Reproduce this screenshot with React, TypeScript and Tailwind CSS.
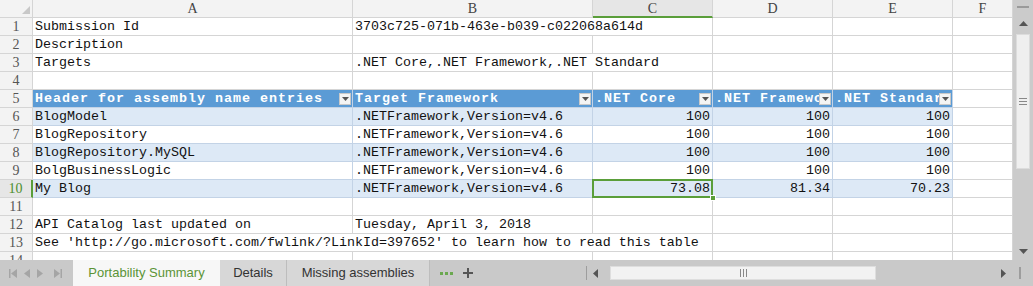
import React from "react";

const mono = { fontFamily: '"Liberation Mono", "DejaVu Sans Mono", monospace' };

const cols = ["A", "B", "C", "D", "E", "F"];

function Dd() {
  return (
    <span className="absolute right-[1px] top-[3px] w-[12px] h-[12px] bg-[#f4f4f4] border border-[#c9c9c9] flex items-center justify-center">
      <svg width="7" height="4" viewBox="0 0 7 4"><path d="M0 0h7L3.5 4z" fill="#555" /></svg>
    </span>
  );
}

type Cell = { t?: string; span?: number; right?: boolean; sel?: boolean };

const rows: { n: number; cells: Cell[]; kind?: "head" | "band" | "white" }[] = [
  { n: 1, cells: [{ t: "Submission Id" }, { t: "3703c725-071b-463e-b039-c022068a614d", span: 2 }, {}, {}, {}] },
  { n: 2, cells: [{ t: "Description" }, {}, {}, {}, {}, {}] },
  { n: 3, cells: [{ t: "Targets" }, { t: ".NET Core,.NET Framework,.NET Standard", span: 2 }, {}, {}, {}] },
  { n: 4, cells: [{}, {}, {}, {}, {}, {}] },
  { n: 5, kind: "head", cells: [{ t: "Header for assembly name entries" }, { t: "Target Framework" }, { t: ".NET Core" }, { t: ".NET Framework" }, { t: ".NET Standard" }, {}] },
  { n: 6, kind: "band", cells: [{ t: "BlogModel" }, { t: ".NETFramework,Version=v4.6" }, { t: "100", right: true }, { t: "100", right: true }, { t: "100", right: true }, {}] },
  { n: 7, kind: "white", cells: [{ t: "BlogRepository" }, { t: ".NETFramework,Version=v4.6" }, { t: "100", right: true }, { t: "100", right: true }, { t: "100", right: true }, {}] },
  { n: 8, kind: "band", cells: [{ t: "BlogRepository.MySQL" }, { t: ".NETFramework,Version=v4.6" }, { t: "100", right: true }, { t: "100", right: true }, { t: "100", right: true }, {}] },
  { n: 9, kind: "white", cells: [{ t: "BolgBusinessLogic" }, { t: ".NETFramework,Version=v4.6" }, { t: "100", right: true }, { t: "100", right: true }, { t: "100", right: true }, {}] },
  { n: 10, kind: "band", cells: [{ t: "My Blog" }, { t: ".NETFramework,Version=v4.6" }, { t: "73.08", right: true, sel: true }, { t: "81.34", right: true }, { t: "70.23", right: true }, {}] },
  { n: 11, cells: [{}, {}, {}, {}, {}, {}] },
  { n: 12, cells: [{ t: "API Catalog last updated on" }, { t: "Tuesday, April 3, 2018" }, {}, {}, {}, {}] },
  { n: 13, cells: [{ t: "See 'http://go.microsoft.com/fwlink/?LinkId=397652' to learn how to read this table", span: 3 }, {}, {}, {}] },
  { n: 14, cells: [{}, {}, {}, {}, {}, {}] },
];

export default function App() {
  return (
    <div className="w-[1033px] h-[286px] overflow-hidden bg-white flex flex-col select-none">
      <div className="flex h-[260px]">
        <div className="w-[1013px] h-[260px] overflow-hidden">
          <div className="grid grid-cols-[33px_320px_240px_120px_120px_120px_60px] auto-rows-[18px]">
            {/* corner */}
            <div className="relative bg-[#f3f3f3] border-r border-b border-[#d5d5d5]">
              <svg className="absolute left-[22px] top-[6px]" width="8" height="8" viewBox="0 0 8 8"><path d="M8 0V8H0z" fill="#c8c8c8" /></svg>
            </div>
            {cols.map((c) => (
              <div
                key={c}
                className={
                  c === "C"
                    ? "bg-[#e6e6e6] border-r border-[#d5d5d5] border-b-2 border-b-[#5a9e3a] flex justify-center text-[#444] text-[14px] leading-[17px]"
                    : "bg-[#f3f3f3] border-r border-b border-[#d5d5d5] flex justify-center text-[#444] text-[14px] leading-[17px]"
                }
                style={{ fontFamily: '"Liberation Serif", serif' }}
              >
                {c}
              </div>
            ))}
            {rows.map((r) => (
              <React.Fragment key={r.n}>
                <div
                  className={
                    r.n === 10
                      ? "bg-[#e6e6e6] border-r-2 border-r-[#5a9e3a] border-b border-[#d5d5d5] flex justify-center text-[#4d8f2e] text-[14px] leading-[17px]"
                      : "bg-[#f3f3f3] border-r border-b border-[#d5d5d5] flex justify-center text-[#555] text-[14px] leading-[17px]"
                  }
                  style={{ fontFamily: '"Liberation Serif", serif' }}
                >
                  {r.n}
                </div>
                {r.cells.map((c, i) => {
                  const inTable = i < 5 && r.kind;
                  let bg = "bg-white";
                  if (inTable && r.kind === "head") bg = "bg-[#5b9bd5]";
                  else if (inTable && r.kind === "band") bg = "bg-[#dde9f6]";
                  const border =
                    inTable ? "border-r border-b border-[#c3d3e6]" : "border-r border-b border-[#d5d5d5]";
                  const head = r.kind === "head" && i < 5;
                  return (
                    <div
                      key={i}
                      className={`relative ${bg} ${border} ${c.span === 2 ? "col-span-2" : c.span === 3 ? "col-span-3" : ""} ${head ? "text-white font-bold tracking-[1px]" : "text-[#111]"} ${c.right ? "text-right pr-[2px]" : "pl-[2px]"} text-[13.33px] leading-[17px] whitespace-nowrap ${head ? "overflow-hidden" : "overflow-visible"}`}
                      style={mono}
                    >
                      {c.t}
                      {head && <Dd />}
                      {c.sel && (
                        <>
                          <span className="absolute left-[-1px] top-[-1px] right-[-1px] bottom-[-1px] border-2 border-[#5a9e3a] pointer-events-none" />
                          <span className="absolute right-[-4px] bottom-[-4px] w-[6px] h-[6px] bg-[#5a9e3a] border border-white z-10" />
                        </>
                      )}
                    </div>
                  );
                })}
              </React.Fragment>
            ))}
          </div>
        </div>
        {/* vertical scrollbar */}
        <div className="w-[20px] h-[260px] bg-[#cbcbcb] flex flex-col items-center">
          <div className="mt-[6px] w-[12px] h-[2px] bg-[#9a9a9a]" />
          <svg className="mt-[13px]" width="9" height="5" viewBox="0 0 9 5"><path d="M0 5L4.5 0L9 5z" fill="#555" /></svg>
          <div className="mt-[8px] w-[14px] h-[135px] bg-[#efefef] border border-[#dcdcdc] flex items-center justify-center">
            <div className="flex flex-col gap-[2px]">
              <div className="w-[8px] h-[1px] bg-[#888]" />
              <div className="w-[8px] h-[1px] bg-[#888]" />
              <div className="w-[8px] h-[1px] bg-[#888]" />
            </div>
          </div>
          <div className="flex-1" />
          <svg className="mb-[6px]" width="9" height="5" viewBox="0 0 9 5"><path d="M0 0L4.5 5L9 0z" fill="#555" /></svg>
        </div>
      </div>
      {/* tab bar */}
      <div
        className="h-[26px] bg-[#c9c9c9] flex items-stretch text-[13px]"
        style={{ fontFamily: '"Liberation Sans", Arial, sans-serif' }}
      >
        <div className="w-[73px] flex items-center gap-[7px] pl-[9px] text-[#a0a0a0]">
          <svg width="8" height="9" viewBox="0 0 8 9"><path d="M0 0h1.5v9H0zM8 0v9L2 4.5z" fill="#a5a5a5" /></svg>
          <svg width="6" height="9" viewBox="0 0 6 9"><path d="M6 0v9L0 4.5z" fill="#a5a5a5" /></svg>
          <svg width="6" height="9" viewBox="0 0 6 9"><path d="M0 0v9L6 4.5z" fill="#a5a5a5" /></svg>
          <svg className="ml-[4px]" width="8" height="9" viewBox="0 0 8 9"><path d="M0 0v9L6 4.5zM6.5 0H8v9H6.5z" fill="#a5a5a5" /></svg>
        </div>
        <div className="w-[147px] bg-[#f7f7f7] flex items-center justify-center text-[#5b9436]">Portability Summary</div>
        <div className="w-[67px] bg-[#d7d7d7] border-r border-[#bdbdbd] flex items-center justify-center text-[#333]">Details</div>
        <div className="w-[143px] bg-[#d7d7d7] border-r border-[#bdbdbd] flex items-center justify-center text-[#333]">Missing assemblies</div>
        <div className="flex items-center pl-[10px] gap-[10px]">
          <span className="flex gap-[2px]">
            <span className="w-[3px] h-[3px] bg-[#6aa84f]" />
            <span className="w-[3px] h-[3px] bg-[#6aa84f]" />
            <span className="w-[3px] h-[3px] bg-[#6aa84f]" />
          </span>
          <svg width="10" height="10" viewBox="0 0 10 10"><path d="M4 0h2v10H4zM0 4h10v2H0z" fill="#555" /></svg>
        </div>
        <div className="w-[113px]" />
        <div className="w-[1px] my-[6px] bg-[#9d9d9d]" />
        <div className="flex items-center pl-[6px]">
          <svg width="5" height="9" viewBox="0 0 5 9"><path d="M5 0v9L0 4.5z" fill="#555" /></svg>
        </div>
        <div className="ml-[12px] my-[6px] w-[266px] bg-[#f2f2f2] border border-[#dedede] flex items-center">
          <div className="ml-[129px] flex gap-[2px]">
            <span className="w-[1px] h-[8px] bg-[#888]" />
            <span className="w-[1px] h-[8px] bg-[#888]" />
            <span className="w-[1px] h-[8px] bg-[#888]" />
          </div>
        </div>
        <div className="flex-1" />
        <div className="flex items-center pr-[12px] gap-[13px]">
          <svg width="5" height="9" viewBox="0 0 5 9"><path d="M0 0v9L5 4.5z" fill="#555" /></svg>
          <span className="w-[2px] h-[12px] bg-[#9d9d9d]" />
        </div>
      </div>
    </div>
  );
}
